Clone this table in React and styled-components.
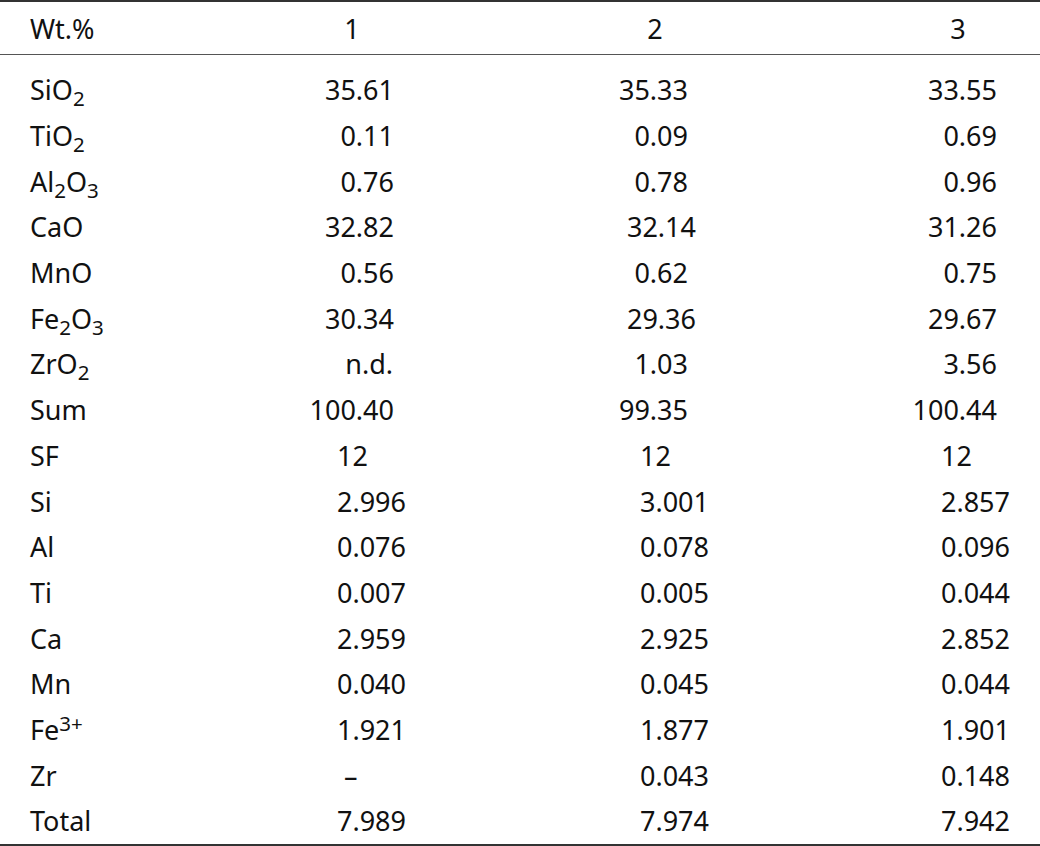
import React from 'react'
import styled, { createGlobalStyle } from 'styled-components'

const GlobalStyle = createGlobalStyle`
    html, body {
        margin: 0;
        padding: 0;
        background: #ffffff;
    }

    body {
        font-family: 'Noto Sans', 'Open Sans', sans-serif;
        color: #111111;
    }
`

const Table = styled.div`
    width: 1040px;
    border-top: 2px solid #333333;
    border-bottom: 2px solid #333333;
    font-size: 27px;
`

const Head = styled.div`
    border-bottom: 1px solid #555555;
`

const Body = styled.div`
    padding-top: 12px;
`

const Row = styled.div`
    display: grid;
    grid-template-columns: 300px 300px 300px 140px;
    align-items: center;
    height: ${p => p.$height}px;
`

const Label = styled.div`
    padding-left: 30px;
    white-space: nowrap;
`

const Cell = styled.div`
    white-space: nowrap;
`

const Centered = styled.div`
    width: ${p => p.$center * 2}px;
    text-align: center;
`

const RightAligned = styled.div`
    width: ${p => p.$right}px;
    text-align: right;
`

const LeftAligned = styled.div`
    padding-left: ${p => p.$left}px;
`

const Sub = styled.sub`
    font-size: 0.76em;
    vertical-align: -0.3em;
    line-height: 0;
`

const Sup = styled.sup`
    font-size: 0.76em;
    vertical-align: 0.42em;
    line-height: 0;
`

// offsets measured from the left edge of each value column
const columns = [
    { center: 52, right: 94, left: 37 },
    { center: 55, right: 88, left: 40 },
    { center: 58, right: 97, left: 41 },
]

const oxides = [
    { label: <>SiO<Sub>2</Sub></>, values: ['35.61', '35.33', '33.55'] },
    { label: <>TiO<Sub>2</Sub></>, values: ['0.11', '0.09', '0.69'] },
    { label: <>Al<Sub>2</Sub>O<Sub>3</Sub></>, values: ['0.76', '0.78', '0.96'] },
    { label: 'CaO', values: ['32.82', ['32.14', 8], '31.26'] },
    { label: 'MnO', values: ['0.56', '0.62', '0.75'] },
    { label: <>Fe<Sub>2</Sub>O<Sub>3</Sub></>, values: ['30.34', ['29.36', 8], '29.67'] },
    { label: <>ZrO<Sub>2</Sub></>, values: [['n.d.', -1], '1.03', '3.56'] },
    { label: 'Sum', values: ['100.40', '99.35', '100.44'] },
]

const cations = [
    { label: 'SF', values: ['12', '12', '12'] },
    { label: 'Si', values: ['2.996', '3.001', '2.857'] },
    { label: 'Al', values: ['0.076', '0.078', '0.096'] },
    { label: 'Ti', values: ['0.007', '0.005', '0.044'] },
    { label: 'Ca', values: ['2.959', '2.925', '2.852'] },
    { label: 'Mn', values: ['0.040', '0.045', '0.044'] },
    { label: <>Fe<Sup>3+</Sup></>, values: ['1.921', '1.877', '1.901'] },
    { label: 'Zr', values: [['–', 7], '0.043', '0.148'] },
    { label: 'Total', values: ['7.989', '7.974', '7.942'] },
]

const unpack = v => Array.isArray(v) ? v : [v, 0]

const DataRow = ({ label, values, align }) => <Row $height={45.7}>
    <Label>{label}</Label>
    {values.map((v, i) => {
        const [text, shift] = unpack(v)
        const col = columns[i]
        return <Cell key={i}>
            {align === 'right'
                ? <RightAligned $right={col.right + shift}>{text}</RightAligned>
                : <LeftAligned $left={col.left + shift}>{text}</LeftAligned>}
        </Cell>
    })}
</Row>

export default function App() {

    return <>
        <GlobalStyle />
        <Table>

            <Head>
                <Row $height={52}>
                    <Label>Wt.%</Label>
                    {columns.map((col, i) => <Cell key={i}>
                        <Centered $center={col.center}>{i + 1}</Centered>
                    </Cell>)}
                </Row>
            </Head>

            <Body>
                {oxides.map((r, i) => <DataRow key={'o' + i} {...r} align='right' />)}
                {cations.map((r, i) => <DataRow key={'c' + i} {...r} align='left' />)}
            </Body>

        </Table>
    </>

}
